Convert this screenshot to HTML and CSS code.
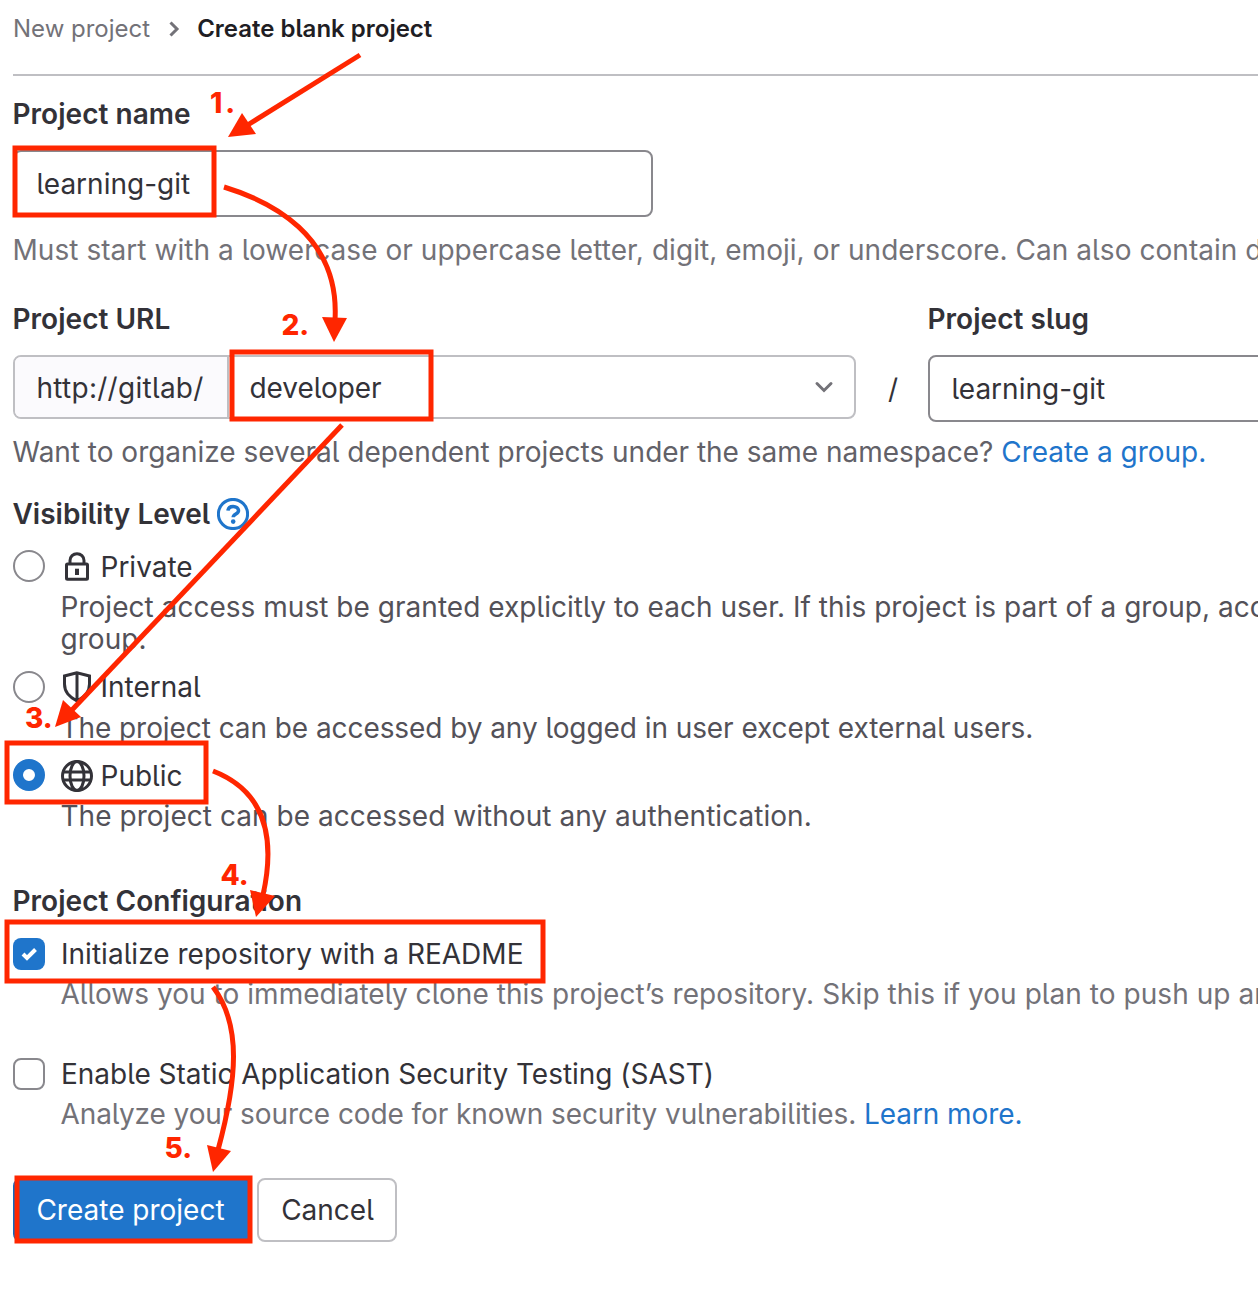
FILE: index.html
```html
<!DOCTYPE html>
<html lang="en">
<head>
<meta charset="utf-8">
<title>Create blank project</title>
<link rel="stylesheet" href="styles.css">
</head>
<body>
<main class="page">
  <nav class="breadcrumb">
    <span class="crumb">New project</span>
    <svg class="crumb-sep" width="12" height="18" viewBox="0 0 12 18"><path d="M2.500 2.500 9 9l-6.500 6.500"/></svg>
    <strong class="crumb-current">Create blank project</strong>
  </nav>

  <label class="label label-name">Project name</label>
  <div class="input input-name">learning-git</div>
  <p class="help help-name">Must start with a lowercase or uppercase letter, digit, emoji, or underscore. Can also contain dots</p>

  <div class="url-row">
    <div class="url-col">
      <label class="label">Project URL</label>
      <div class="namespace">
        <span class="prefix">http://gitlab/</span>
        <span class="select"><span class="select-value">developer</span>
          <svg class="chevron" width="20" height="14" viewBox="0 0 20 14"><path d="m3 3.500 7 7 7-7"/></svg>
        </span>
      </div>
    </div>
    <span class="slash">/</span>
    <div class="slug-col">
      <label class="label">Project slug</label>
      <div class="input input-slug">learning-git</div>
    </div>
  </div>
  <p class="help help-group">Want to organize several dependent projects under the same namespace? <a class="link">Create a group.</a></p>

  <div class="label label-visibility"><span>Visibility Level</span>
    <svg class="question" width="32" height="32" viewBox="0 0 32 32"><circle cx="16" cy="16" r="14.600"/><path d="M11 12.600c.3-2.600 2.300-4.100 5.100-4.100 3.100 0 5.400 1.700 5.400 4.300 0 3.300-5.300 3.100-5.300 6.500"/><circle class="dot" cx="16.200" cy="23.600" r="2.300"/></svg>
  </div>

  <div class="option option-private">
    <span class="radio"></span>
    <svg class="icon" width="32" height="32" viewBox="0 0 32 32"><rect x="5.500" y="13" width="21" height="15.300" rx="1"/><path d="M9 13V9.500a7 6.800 0 0 1 14 0V13"/><path class="solid" d="M14 17.700h4v6.300h-4z"/></svg>
    <span>Private</span>
  </div>
  <p class="desc desc-private">Project access must be granted explicitly to each user. If this project is part of a group, access<br>group.</p>

  <div class="option option-internal">
    <span class="radio"></span>
    <svg class="icon" width="32" height="32" viewBox="0 0 32 32"><path d="M16 1.800 3.500 5V13c0 8 4.500 12.500 12.500 17 8-4.500 12.500-9 12.500-17V5zM16 2v28"/></svg>
    <span>Internal</span>
  </div>
  <p class="desc desc-internal">The project can be accessed by any logged in user except external users.</p>

  <div class="option option-public">
    <span class="radio checked"></span>
    <svg class="icon" width="32" height="32" viewBox="0 0 32 32"><circle cx="16" cy="16" r="14.500"/><ellipse cx="16" cy="16" rx="7" ry="14.500"/><path d="M2.500 12h27M2.500 20h27"/></svg>
    <span>Public</span>
  </div>
  <p class="desc desc-public">The project can be accessed without any authentication.</p>

  <div class="label label-config">Project Configuration</div>
  <div class="option option-readme">
    <span class="checkbox checked"><svg width="32" height="32" viewBox="0 0 32 32"><path d="m10 16 4 4 8.500-8.500"/></svg></span>
    <span>Initialize repository with a README</span>
  </div>
  <p class="desc muted desc-readme">Allows you to immediately clone this project’s repository. Skip this if you plan to push up an</p>
  <div class="option option-sast">
    <span class="checkbox"></span>
    <span>Enable Static Application Security Testing (SAST)</span>
  </div>
  <p class="desc muted desc-sast">Analyze your source code for known security vulnerabilities. <a class="link">Learn more.</a></p>

  <div class="actions">
    <button class="btn btn-primary">Create project</button>
    <button class="btn btn-default">Cancel</button>
  </div>

  <svg class="annotations" width="1258" height="1298" viewBox="0 0 1258 1298">
    <g class="frames">
      <rect x="15" y="148" width="199" height="67"/>
      <rect x="232" y="352" width="199" height="67"/>
      <rect x="7" y="743" width="199" height="59"/>
      <rect x="7" y="922" width="536" height="59"/>
      <rect x="17" y="1178" width="233" height="63"/>
    </g>
    <g class="shafts">
      <path d="M360 55 246 126"/>
      <path d="M224 187C270 201 340 235 335 320"/>
      <path d="M342 425 71 711"/>
      <path d="M213 771C262 790 277 832 263 895"/>
      <path d="M213 987C242 1025 237 1080 218 1150"/>
    </g>
    <g class="heads">
      <path d="m228 137 14-24 14 21z"/>
      <path d="m334 342-12-25 25 1z"/>
      <path d="m55 727 8-27 18 17z"/>
      <path d="m256 917-6-27 25 6z"/>
      <path d="m213 1172-6-27 24 6z"/>
    </g>
    <g class="numbers">
      <text class="first" x="210" y="112.500">1.</text>
      <text x="281.500" y="335">2.</text>
      <text x="25" y="727.500">3.</text>
      <text x="220.500" y="885">4.</text>
      <text x="164.500" y="1157.500">5.</text>
    </g>
  </svg>
</main>
</body>
</html>
```

FILE: styles.css
```css
* { box-sizing: border-box; }
body {
  margin: 0;
  background: #fff;
  color: #333238;
  font-family: Inter, "Liberation Sans", sans-serif;
  font-size: 28px;
  line-height: 40px;
  font-feature-settings: "cv05";
}
.page {
  position: relative;
  width: 1258px;
  height: 1298px;
  padding-left: 13px;
  overflow: hidden;
  white-space: nowrap;
}
p { margin: 0; }
.breadcrumb {
  display: flex;
  align-items: center;
  height: 76px;
  padding-bottom: 16px;
  border-bottom: 2px solid #bfbfc3;
  font-size: 24px;
}
.crumb { color: #737278; }
.crumb-sep { margin: 0 17px 0 18px; fill: none; stroke: #737278; stroke-width: 3; }
.crumb-current { color: #1f1e24; font-weight: 600; }
.label { display: block; height: 40px; margin-left: -0.5px; font-weight: 640; letter-spacing: 0.03px; }
.label-name { margin-top: 18px; }
.input {
  height: 67px;
  border: 2px solid #89888d;
  border-radius: 8px;
  padding: 0 21.500px;
  line-height: 65px;
}
.input-name { width: 640px; margin-top: 16px; }
.help { height: 40px; margin-left: -0.5px; color: #737278; }
.help-name { margin-top: 13px; letter-spacing: 0.045px; }
.url-row { display: flex; margin-top: 29px; }
.url-col { flex: none; width: 843px; }
.namespace {
  display: flex;
  height: 64px;
  margin-top: 16px;
  border: 2px solid #bfbfc3;
  border-radius: 8px;
  line-height: 62px;
}
.prefix {
  width: 214px;
  padding-left: 21.500px;
  background: #fbfafd;
  border-right: 2px solid #bfbfc3;
  border-radius: 6px 0 0 6px;
  letter-spacing: 0.27px;
}
.select { display: flex; flex: 1; align-items: center; justify-content: space-between; padding: 0 20px 0 20.500px; }
.select-value { padding-top: 1px; letter-spacing: -0.05px; }
.chevron { fill: none; stroke: #737278; stroke-width: 3; stroke-linecap: round; }
.slash { flex: none; width: 72px; margin-top: 70px; padding-left: 2px; text-align: center; }
.slug-col { flex: none; }
.input-slug { width: 400px; margin-top: 16px; }
.help-group { margin-top: 10px; color: #626168; letter-spacing: -0.02px; }
.link { color: #1f75cb; }
.label-visibility { display: flex; align-items: center; gap: 7px; margin-top: 22px; letter-spacing: 0; }
.question { fill: none; stroke: #1f75cb; stroke-width: 3; }
.question path { stroke-width: 3.500; }
.question .dot { fill: #1f75cb; stroke: none; }
.option { display: flex; align-items: center; height: 40px; }
.icon { margin-right: 7.500px; fill: none; stroke: #333238; stroke-width: 3; }
.icon .solid { fill: #333238; stroke: none; }
.radio, .checkbox { width: 32px; height: 32px; margin-right: 16px; border: 2px solid #89888d; }
.radio { border-radius: 50%; }
.option-private .radio, .option-public .radio { margin-top: -2px; }
.radio.checked { border: 10px solid #1f75cb; }
.checkbox { border-radius: 8px; }
.checkbox.checked { border: 0; background: #1f75cb; }
.checkbox svg { display: block; fill: none; stroke: #fff; stroke-width: 4; }
.desc { padding-left: 47.500px; line-height: 32px; color: #535158; }
.muted { color: #737278; }
.option-private { margin-top: 13px; }
.desc-private { margin-top: 4px; letter-spacing: 0.03px; }
.option-internal { margin-top: 12px; }
.desc-internal { margin-top: 5px; letter-spacing: -0.07px; }
.option-public { margin-top: 12px; }
.desc-public { margin-top: 4px; letter-spacing: 0.04px; }
.label-config { margin-top: 49px; }
.option-readme { margin-top: 13px; letter-spacing: 0.02px; }
.desc-readme { margin-top: 4px; letter-spacing: 0.045px; }
.option-sast { margin-top: 44px; letter-spacing: -0.02px; }
.desc-sast { margin-top: 4px; letter-spacing: -0.085px; }
.actions { display: flex; gap: 5px; margin-top: 48px; }
.btn {
  height: 64px;
  padding: 0;
  border: 2px solid #bfbfc3;
  border-radius: 8px;
  background: #fff;
  color: #333238;
  font: inherit;
  font-feature-settings: inherit;
}
.btn-primary { width: 239px; padding-right: 4px; border-color: #1068bf; background: #1f75cb; color: #fff; }
.btn-default { width: 140px; padding-left: 1px; }
.annotations { position: absolute; left: 0; top: 0; }
.frames, .shafts { fill: none; stroke: #ff2600; stroke-width: 5; }
.heads { fill: #ff2600; }
.numbers { fill: #ff2600; font: 800 28px Inter, "Liberation Sans", sans-serif; }
.numbers .first { letter-spacing: 3px; }
```
